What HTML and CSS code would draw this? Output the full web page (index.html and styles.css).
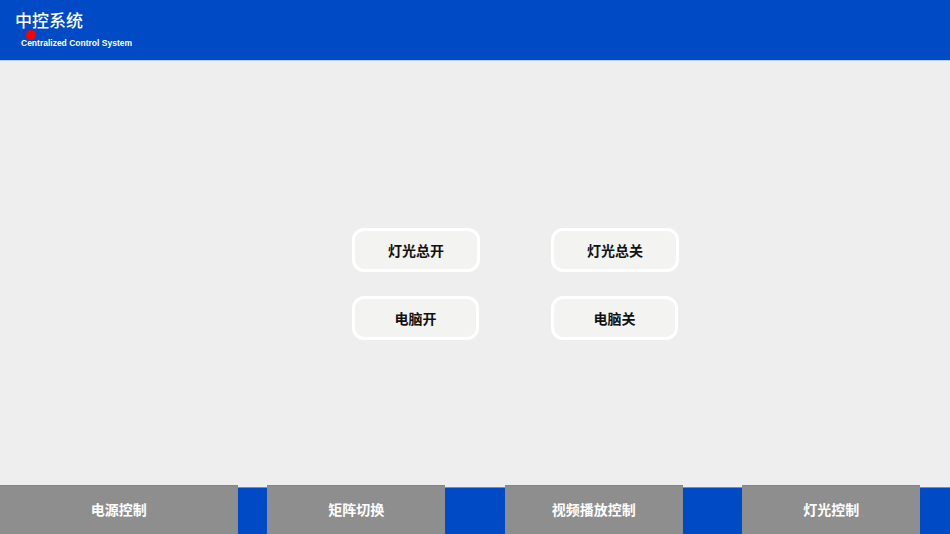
FILE: index.html
```html
<!DOCTYPE html>
<html lang="zh-CN">
<head>
  <meta charset="UTF-8">
  <meta name="viewport" content="width=device-width, initial-scale=1.0">
  <title>中控系统</title>
  <link rel="stylesheet" href="styles.css">
</head>
<body>
  <header class="topbar">
    <div class="brand">
      <h1>中控系统</h1>
      <span class="dot"></span>
      <p>Centralized Control System</p>
    </div>
  </header>

  <!-- 控制按钮 -->
  <main class="panel">
    <div class="btn-grid">
      <button class="ctl-btn">灯光总开</button>
      <button class="ctl-btn">灯光总关</button>
      <button class="ctl-btn shift">电脑开</button>
      <button class="ctl-btn shift">电脑关</button>
    </div>
  </main>

  <!-- 底部导航 -->
  <nav class="tabbar">
    <div class="tab-cell"><a class="tab full">电源控制</a></div>
    <div class="tab-cell"><a class="tab">矩阵切换</a></div>
    <div class="tab-cell"><a class="tab">视频播放控制</a></div>
    <div class="tab-cell"><a class="tab">灯光控制</a></div>
  </nav>
</body>
</html>
```

FILE: styles.css
```css
html, body {
  margin: 0;
  padding: 0;
  height: 100%;
}

body {
  font-family: "Noto Sans CJK SC", "Noto Sans", sans-serif;
  background-color: #eeeeee;
  display: flex;
  flex-direction: column;
  overflow: hidden;
}

.topbar {
  height: 60px;
  background: #004ac6;
  border-bottom: 1px solid #b9cdef;
  color: #fff;
  flex-shrink: 0;
}

.brand {
  position: relative;
  padding: 9px 0 0 15px;
}

.brand h1 {
  margin: 0;
  font-size: 17px;
  font-weight: 500;
  line-height: 22px;
}

.brand p {
  margin: 7px 0 0 6px;
  font-family: "Liberation Sans", Arial, sans-serif;
  font-size: 8.5px;
  font-weight: bold;
}

.dot {
  position: absolute;
  left: 26px;
  top: 30px;
  width: 10px;
  height: 10px;
  border-radius: 50%;
  background: #ff0000;
}

.panel {
  flex: 1;
}

.btn-grid {
  display: grid;
  grid-template-columns: 128px 128px;
  column-gap: 71px;
  row-gap: 24px;
  margin: 167px 0 0 352px;
}

.ctl-btn {
  height: 44px;
  box-sizing: border-box;
  border: 3px solid #ffffff;
  border-radius: 12px;
  background: #f3f3f2;
  font-family: inherit;
  font-size: 14px;
  font-weight: bold;
  color: #111;
  padding: 0;
}

.ctl-btn.shift {
  width: 127px;
}

.tabbar {
  height: 49px;
  flex-shrink: 0;
  display: flex;
  background: linear-gradient(to bottom, #eeeeee 0 2px, #5f8fe0 2px 3px, #004ac6 3px);
}

.tab-cell {
  flex: 1;
  display: flex;
  justify-content: center;
}

.tab {
  width: 178px;
  box-sizing: border-box;
  background: #8e8e8e;
  border-top: 1px solid #858585;
  padding-bottom: 2px;
  color: #fff;
  font-size: 14px;
  font-weight: bold;
  display: flex;
  align-items: center;
  justify-content: center;
  cursor: pointer;
}

.tab.full {
  width: 100%;
}
```
